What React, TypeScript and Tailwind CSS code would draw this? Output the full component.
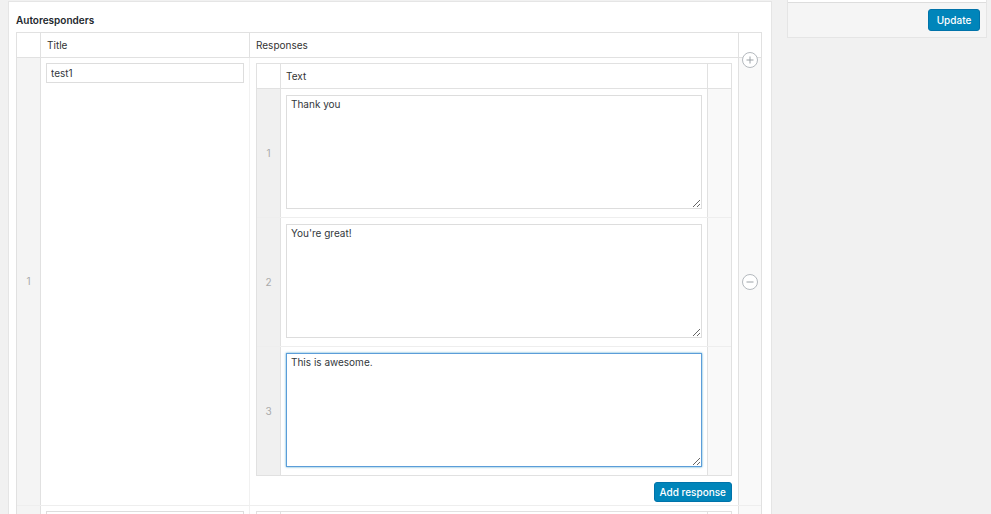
import React from 'react';

const responses = ['Thank you', "You're great!", 'This is awesome.'];

const CircleIcon: React.FC<{ plus?: boolean }> = ({ plus }) => (
  <svg width="16" height="16" viewBox="0 0 16 16" fill="none">
    <circle cx="8" cy="8" r="7.5" fill="white" stroke="#b4b9be" />
    <line x1="4.5" y1="8" x2="11.5" y2="8" stroke="#9ca2a7" strokeWidth="1" />
    {plus && <line x1="8" y1="4.5" x2="8" y2="11.5" stroke="#9ca2a7" strokeWidth="1" />}
  </svg>
);

const ResponseRow: React.FC<{ index: number; text: string; last: boolean }> = ({ index, text, last }) => (
  <div className={`flex ${last ? '' : 'border-b border-[#eeeeee]'}`}>
    <div className="w-[24px] shrink-0 bg-[#f0f0f0] border-r border-[#e1e1e1] flex items-center justify-center text-[#aaaaaa]">
      {index + 1}
    </div>
    <div className="flex-1 pt-[6px] pb-[8px] px-[5px]">
      <textarea
        defaultValue={text}
        className={`block w-full h-[114px] bg-white px-[4px] py-[1px] text-[#32373c] outline-none border ${
          last ? 'border-[#5b9dd9] shadow-[0_0_2px_rgba(30,140,190,0.8)]' : 'border-[#dddddd]'
        }`}
      />
    </div>
    <div className="w-[24px] shrink-0 bg-[#f9f9f9] border-l border-[#e1e1e1]" />
  </div>
);

export default function App() {
  return (
    <div
      className="w-[991px] h-[514px] overflow-hidden bg-[#f1f1f1] flex items-start pl-[8px] text-[10px] text-[#333333]"
      style={{ fontFamily: 'Inter, "Liberation Sans", sans-serif' }}
    >
      {/* main postbox */}
      <div className="w-[764px] h-[520px] mt-px bg-white border-x border-t border-[#e5e5e5] pl-[7px] pt-[11px]">
        <div className="h-[14px] leading-[14px] font-semibold text-[#23282d] mb-[5px]">Autoresponders</div>

        <div className="w-[746px] border border-[#e1e1e1]">
          {/* header */}
          <div className="flex h-[25px] border-b border-[#e1e1e1]">
            <div className="w-[24px] shrink-0 border-r border-[#e1e1e1]" />
            <div className="w-[209px] shrink-0 border-r border-[#e1e1e1] pl-[6px] pt-px flex items-center">Title</div>
            <div className="w-[489px] shrink-0 border-r border-[#e1e1e1] pl-[6px] pt-px flex items-center">Responses</div>
            <div className="flex-1" />
          </div>

          {/* row 1 */}
          <div className="flex h-[448px] border-b border-[#eeeeee]">
            <div className="w-[24px] shrink-0 bg-[#f4f4f4] border-r border-[#e1e1e1] flex items-center justify-center text-[#aaaaaa]">
              1
            </div>
            <div className="w-[209px] shrink-0 border-r border-[#f1f1f1] p-[5px]">
              <input
                defaultValue="test1"
                className="block w-full h-[20px] border border-[#dddddd] px-[4px] text-[#32373c] outline-none"
              />
            </div>
            <div className="w-[489px] shrink-0 border-r border-[#e1e1e1] pt-[5px] px-[6px]">
              <div className="border border-[#e1e1e1]">
                <div className="flex h-[25px] border-b border-[#e1e1e1]">
                  <div className="w-[24px] shrink-0 border-r border-[#e1e1e1]" />
                  <div className="flex-1 pl-[5px] pt-px flex items-center">Text</div>
                  <div className="w-[24px] shrink-0 border-l border-[#e1e1e1]" />
                </div>
                {responses.map((r, i) => (
                  <ResponseRow key={i} index={i} text={r} last={i === responses.length - 1} />
                ))}
              </div>
              <div className="flex justify-end mt-[6px]">
                <button className="h-[20px] px-[5px] rounded-[3px] bg-[#0085ba] border border-[#0073aa] text-white font-medium leading-none">
                  Add response
                </button>
              </div>
            </div>
            <div className="flex-1 bg-[#f9f9f9] relative flex items-center justify-center">
              <div className="absolute -top-[6px] left-1/2 -translate-x-1/2">
                <CircleIcon plus />
              </div>
              <CircleIcon />
            </div>
          </div>

          {/* row 2 (cut off) */}
          <div className="flex h-[40px]">
            <div className="w-[24px] shrink-0 bg-[#f4f4f4] border-r border-[#e1e1e1]" />
            <div className="w-[209px] shrink-0 border-r border-[#f1f1f1] p-[5px]">
              <div className="h-[20px] border border-[#dddddd]" />
            </div>
            <div className="w-[489px] shrink-0 border-r border-[#e1e1e1] pt-[5px] px-[6px]">
              <div className="h-[30px] border border-[#e1e1e1] flex">
                <div className="w-[24px] shrink-0 border-r border-[#e1e1e1]" />
                <div className="flex-1" />
                <div className="w-[24px] shrink-0 border-l border-[#e1e1e1]" />
              </div>
            </div>
            <div className="flex-1 bg-[#f9f9f9]" />
          </div>
        </div>
      </div>

      {/* sidebar publish box */}
      <div className="ml-[15px] w-[200px] border-x border-b border-[#e5e5e5] bg-white pt-[2px]">
        <div className="border-t border-[#dddddd] bg-[#f5f5f5] px-[6px] pt-[6px] pb-[6px] flex justify-end">
          <button className="h-[22px] w-[52px] rounded-[3px] bg-[#0085ba] border border-[#0073aa] text-white font-medium leading-none">
            Update
          </button>
        </div>
      </div>
    </div>
  );
}
